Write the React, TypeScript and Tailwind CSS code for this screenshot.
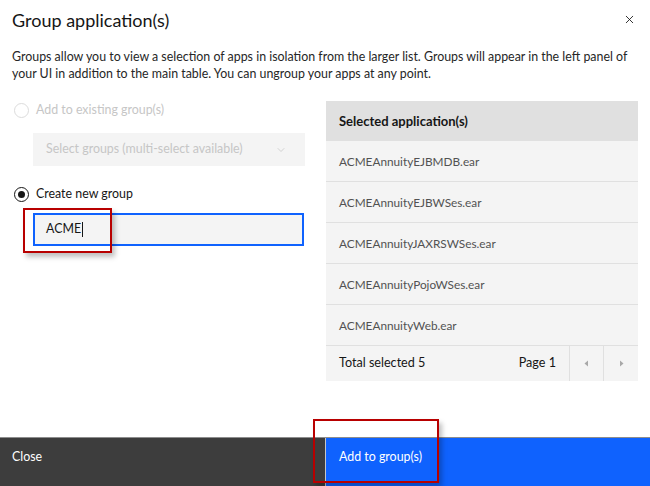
import { X, ChevronDown } from "lucide-react";

const apps = [
  "ACMEAnnuityEJBMDB.ear",
  "ACMEAnnuityEJBWSes.ear",
  "ACMEAnnuityJAXRSWSes.ear",
  "ACMEAnnuityPojoWSes.ear",
  "ACMEAnnuityWeb.ear",
];

const App = () => {
  return (
    <div className="relative flex h-[486px] w-[650px] flex-col overflow-hidden bg-white font-['Lato',sans-serif] text-[#161616]">
      {/* header */}
      <div className="flex items-start justify-between pl-3 pr-[14px] pt-[8px]">
        <h2 className="text-[18px] leading-[24px]">Group application(s)</h2>
        <X className="mt-[5px] text-[#161616]" size={13} strokeWidth={1.6} />
      </div>
      <p className="mt-[16px] pl-3 pr-2 text-[12.4px] leading-[17px] text-[#262626]">
        Groups allow you to view a selection of apps in isolation from the larger list. Groups will appear in the left panel of your UI in addition to the main table. You can ungroup your apps at any point.
      </p>

      {/* body */}
      <div className="mt-[19px] flex pl-[14px]">
        <div className="w-[291px]">
          <div className="flex h-[18px] items-center gap-[7px]">
            <span className="h-[15px] w-[15px] rounded-full border border-[#dcdcdc]" />
            <span className="text-[12.4px] text-[#c6c6c6]">Add to existing group(s)</span>
          </div>
          <div className="ml-[19px] mt-[14px] flex h-[33px] w-[272px] items-center justify-between bg-[#f4f4f4] pl-[13px] pr-[18px]">
            <span className="text-[12.4px] text-[#c6c6c6]">Select groups (multi-select available)</span>
            <ChevronDown className="text-[#c6c6c6]" size={12} strokeWidth={1.5} />
          </div>
          <div className="mt-[19px] flex h-[18px] items-center gap-[7px]">
            <span className="flex h-[15px] w-[15px] items-center justify-center rounded-full border border-[#161616]">
              <span className="h-[7px] w-[7px] rounded-full bg-[#161616]" />
            </span>
            <span className="text-[12.4px]">Create new group</span>
          </div>
          <div className="ml-[19px] mt-[10px] flex h-[33px] w-[271px] items-center border-2 border-[#0f62fe] bg-[#f4f4f4] pl-[11px]">
            <span className="text-[12.4px]">ACME</span>
            <span className="ml-[1px] h-[15px] w-px bg-[#161616]" />
          </div>
        </div>

        <div className="ml-[21px] w-[312px] bg-[#f4f4f4]">
          <div className="flex h-[40px] items-center bg-[#e0e0e0] pl-[13px] pt-px text-[13px] font-bold">
            Selected application(s)
          </div>
          {apps.map((a) => (
            <div key={a} className="flex h-[41px] items-center border-b border-[#e0e0e0] pl-[13px] pt-px text-[11.8px] text-[#525252]">
              {a}
            </div>
          ))}
          <div className="flex h-[35px] items-center text-[12.6px]">
            <span className="flex-1 pl-[13px]">Total selected 5</span>
            <span className="pr-[13px]">Page 1</span>
            <span className="flex h-full w-[34px] items-center justify-center border-l border-[#e0e0e0]">
              <svg width="5" height="7" viewBox="0 0 5 7"><path d="M4 0.5L0.5 3.5L4 6.5Z" fill="#a8a8a8" /></svg>
            </span>
            <span className="flex h-full w-[35px] items-center justify-center border-l border-[#e0e0e0]">
              <svg width="5" height="7" viewBox="0 0 5 7"><path d="M1 0.5L4.5 3.5L1 6.5Z" fill="#a8a8a8" /></svg>
            </span>
          </div>
        </div>
      </div>

      <div className="flex-1" />

      {/* footer */}
      <div className="grid h-[49px] grid-cols-[325px_1fr] border-t border-[#8d8d8d] text-[12.4px] text-white">
        <div className="bg-[#3d3d3d] pl-3 pt-[10px]">Close</div>
        <div className="border-l border-[#c6c6c6] bg-[#0f62fe] pl-[13px] pt-[10px]">Add to group(s)</div>
      </div>

      {/* annotation boxes */}
      <div className="absolute left-[23px] top-[208px] h-[45px] w-[89px] border-2 border-[#b80000] shadow-[3px_4px_5px_rgba(0,0,0,0.25)]" />
      <div className="absolute left-[313px] top-[419px] h-[64px] w-[126px] border-2 border-[#b80000] shadow-[3px_4px_5px_rgba(0,0,0,0.25)]" />
    </div>
  );
};

export default App;
